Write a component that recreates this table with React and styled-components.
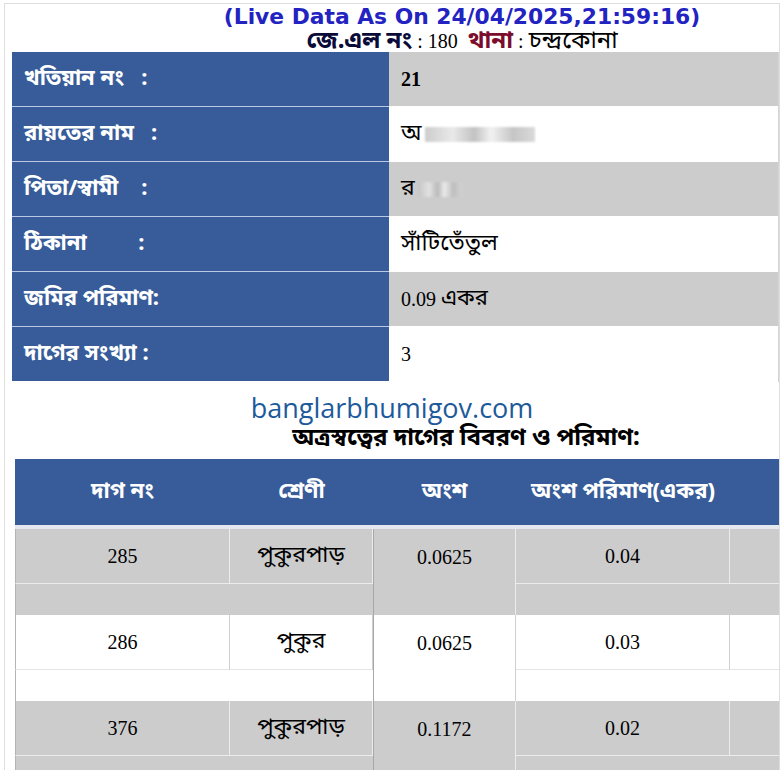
import styled, { createGlobalStyle } from "styled-components";

const GlobalStyle = createGlobalStyle`
    body {
        margin: 0;
        background: #ffffff;
        font-family: "Liberation Serif", "Noto Serif Bengali", "Noto Sans Bengali", "Lohit Bengali", FreeSerif, serif;
        color: #000000;
    }
`;

const bengali = `"Noto Sans Bengali", "Noto Serif Bengali", "Lohit Bengali", FreeSans, sans-serif`;

const Frame = styled.div`
    margin: 3px 0 0 4px;
    width: 774px;
    height: 767px;
    border: 1px solid #dedede;
    border-bottom: none;
    overflow: hidden;
`;

const Header = styled.div`
    padding: 0 0 0 140px;
    text-align: center;
`;

const LiveData = styled.div`
    font-family: "DejaVu Sans", sans-serif;
    font-weight: 700;
    font-size: 21.8px;
    line-height: 26px;
    color: #2323c2;
    white-space: nowrap;
`;

const Meta = styled.div`
    font-size: 20px;
    line-height: 22px;
    height: 22px;
    white-space: nowrap;
`;

const MetaLabel = styled.b`
    font-family: ${bengali};
    font-size: 24px;
    color: ${(p) => p.$color};
`;

const Bn = styled.span`
    font-family: ${bengali};
    font-size: ${(p) => p.$size || 23}px;
`;

const InfoTable = styled.div`
    margin-left: 7px;
    display: grid;
    grid-template-columns: 377px 1fr;
    border-right: 1px solid #d4d4d4;
`;

const Label = styled.div`
    background: #375c99;
    color: #ffffff;
    font-family: ${bengali};
    font-weight: 700;
    font-size: 22px;
    height: 54px;
    display: flex;
    align-items: center;
    padding-left: 12px;
    white-space: pre;
    border-bottom: 1px solid #b9c9e4;
    &:nth-last-child(2) {
        border-bottom: none;
    }
`;

const Value = styled.div`
    background: ${(p) => (p.$shade ? "#cccccc" : "#ffffff")};
    font-size: 20px;
    font-weight: ${(p) => (p.$bold ? 700 : 400)};
    height: 54px;
    display: flex;
    align-items: center;
    padding-left: 12px;
    border-bottom: 1px solid #ffffff;
    white-space: pre;
`;

const Blur = styled.span`
    display: inline-block;
    width: ${(p) => p.$w}px;
    height: 15px;
    margin-left: 3px;
    background: linear-gradient(90deg, #c4c4c4, #e6e6e6 25%, #b8b8b8 45%, #f0f0f0 60%, #bcbcbc 80%, #d4d4d4);
    filter: blur(1.2px);
    opacity: 0.85;
`;

const Site = styled.div`
    margin-top: 10px;
    text-align: center;
    font-family: "Open Sans", sans-serif;
    font-weight: 500;
    font-size: 27px;
    line-height: 32px;
    color: #1d5a9b;
`;

const Subtitle = styled.div`
    padding-left: 148px;
    text-align: center;
    font-family: ${bengali};
    font-weight: 700;
    font-size: 24px;
    line-height: 30px;
    white-space: nowrap;
`;

const PlotTable = styled.div`
    margin: 5px 0 0 10px;
    width: 960px;
`;

const HeadRow = styled.div`
    display: grid;
    grid-template-columns: 215px 143px 143px 214px 245px;
    height: 66px;
    background: #375c99;
    border-bottom: 4px solid #e4e8ee;
`;

const HeadCell = styled.div`
    display: flex;
    align-items: center;
    justify-content: center;
    color: #ffffff;
    font-family: ${bengali};
    font-weight: 700;
    font-size: 22px;
    white-space: nowrap;
`;

const Record = styled.div`
    display: grid;
    grid-template-columns: 215px 143px 143px 214px 245px;
    grid-template-rows: 55px 31px;
    background: ${(p) => (p.$shade ? "#cccccc" : "#ffffff")};
`;

const Cell = styled.div`
    grid-row: 1;
    grid-column: ${(p) => p.$col};
    display: flex;
    align-items: center;
    justify-content: center;
    font-size: 20px;
    border-right: 1px solid ${(p) => (p.$shade ? "#ececec" : "#cfcfcf")};
    border-bottom: 1px solid ${(p) => (p.$shade ? "#ececec" : "#e4e4e4")};
    border-left: ${(p) => (p.$col === 1 ? "1px solid #b4b4b4" : "none")};
`;

const SpanCell = styled.div`
    grid-row: 1 / span 2;
    grid-column: 3;
    display: flex;
    justify-content: center;
    padding-top: 17px;
    font-size: 20px;
    border-left: 1px solid #a8a8a8;
    border-right: 1px solid ${(p) => (p.$shade ? "#ececec" : "#cfcfcf")};
`;

const Filler = styled.div`
    grid-row: 2;
    grid-column: 1;
    border-left: 1px solid #b4b4b4;
`;

const info = [
    { label: "খতিয়ান নং   :", value: "21", bold: true },
    { label: "রায়তের নাম   :", value: <Bn>অ</Bn>, blur: 110 },
    { label: "পিতা/স্বামী    :", value: <Bn>র</Bn>, blur: 44 },
    { label: "ঠিকানা         :", value: <Bn>সাঁটিতেঁতুল</Bn> },
    { label: "জমির পরিমাণ:", value: <>0.09 <Bn $size={22}>একর</Bn></> },
    { label: "দাগের সংখ্যা :", value: "3" },
];

const plots = [
    { dag: "285", kind: "পুকুরপাড়", share: "0.0625", area: "0.04" },
    { dag: "286", kind: "পুকুর", share: "0.0625", area: "0.03" },
    { dag: "376", kind: "পুকুরপাড়", share: "0.1172", area: "0.02" },
];

export default function App() {
    return (
        <>
            <GlobalStyle />
            <Frame>
                <Header>
                    <LiveData>(Live Data As On 24/04/2025,21:59:16)</LiveData>
                    <Meta>
                        <MetaLabel $color="#0b0b3a">জে.এল নং</MetaLabel> : 180{" "}
                        &nbsp;<MetaLabel $color="#7c0c2c">থানা</MetaLabel> : <Bn $size={24}>চন্দ্রকোনা</Bn>
                    </Meta>
                </Header>

                <InfoTable>
                    {info.map((row, i) => [
                        <Label key={`l${i}`}>{row.label}</Label>,
                        <Value key={`v${i}`} $shade={i % 2 === 0} $bold={row.bold}>
                            {row.value}
                            {row.blur && <Blur $w={row.blur} />}
                        </Value>,
                    ])}
                </InfoTable>

                <Site>banglarbhumigov.com</Site>
                <Subtitle>অত্রস্বত্বের দাগের বিবরণ ও পরিমাণ:</Subtitle>

                <PlotTable>
                    <HeadRow>
                        <HeadCell>দাগ নং</HeadCell>
                        <HeadCell>শ্রেণী</HeadCell>
                        <HeadCell>অংশ</HeadCell>
                        <HeadCell>অংশ পরিমাণ(একর)</HeadCell>
                        <HeadCell>বর্তমান</HeadCell>
                    </HeadRow>
                    {plots.map((p, i) => {
                        const shade = i % 2 === 0;
                        return (
                            <Record key={p.dag} $shade={shade}>
                                <Cell $shade={shade} $col={1}>{p.dag}</Cell>
                                <Cell $shade={shade} $col={2}><Bn>{p.kind}</Bn></Cell>
                                <SpanCell $shade={shade}>{p.share}</SpanCell>
                                <Cell $shade={shade} $col={4}>{p.area}</Cell>
                                <Cell $shade={shade} $col={5} />
                                <Filler />
                            </Record>
                        );
                    })}
                </PlotTable>
            </Frame>
        </>
    );
}
